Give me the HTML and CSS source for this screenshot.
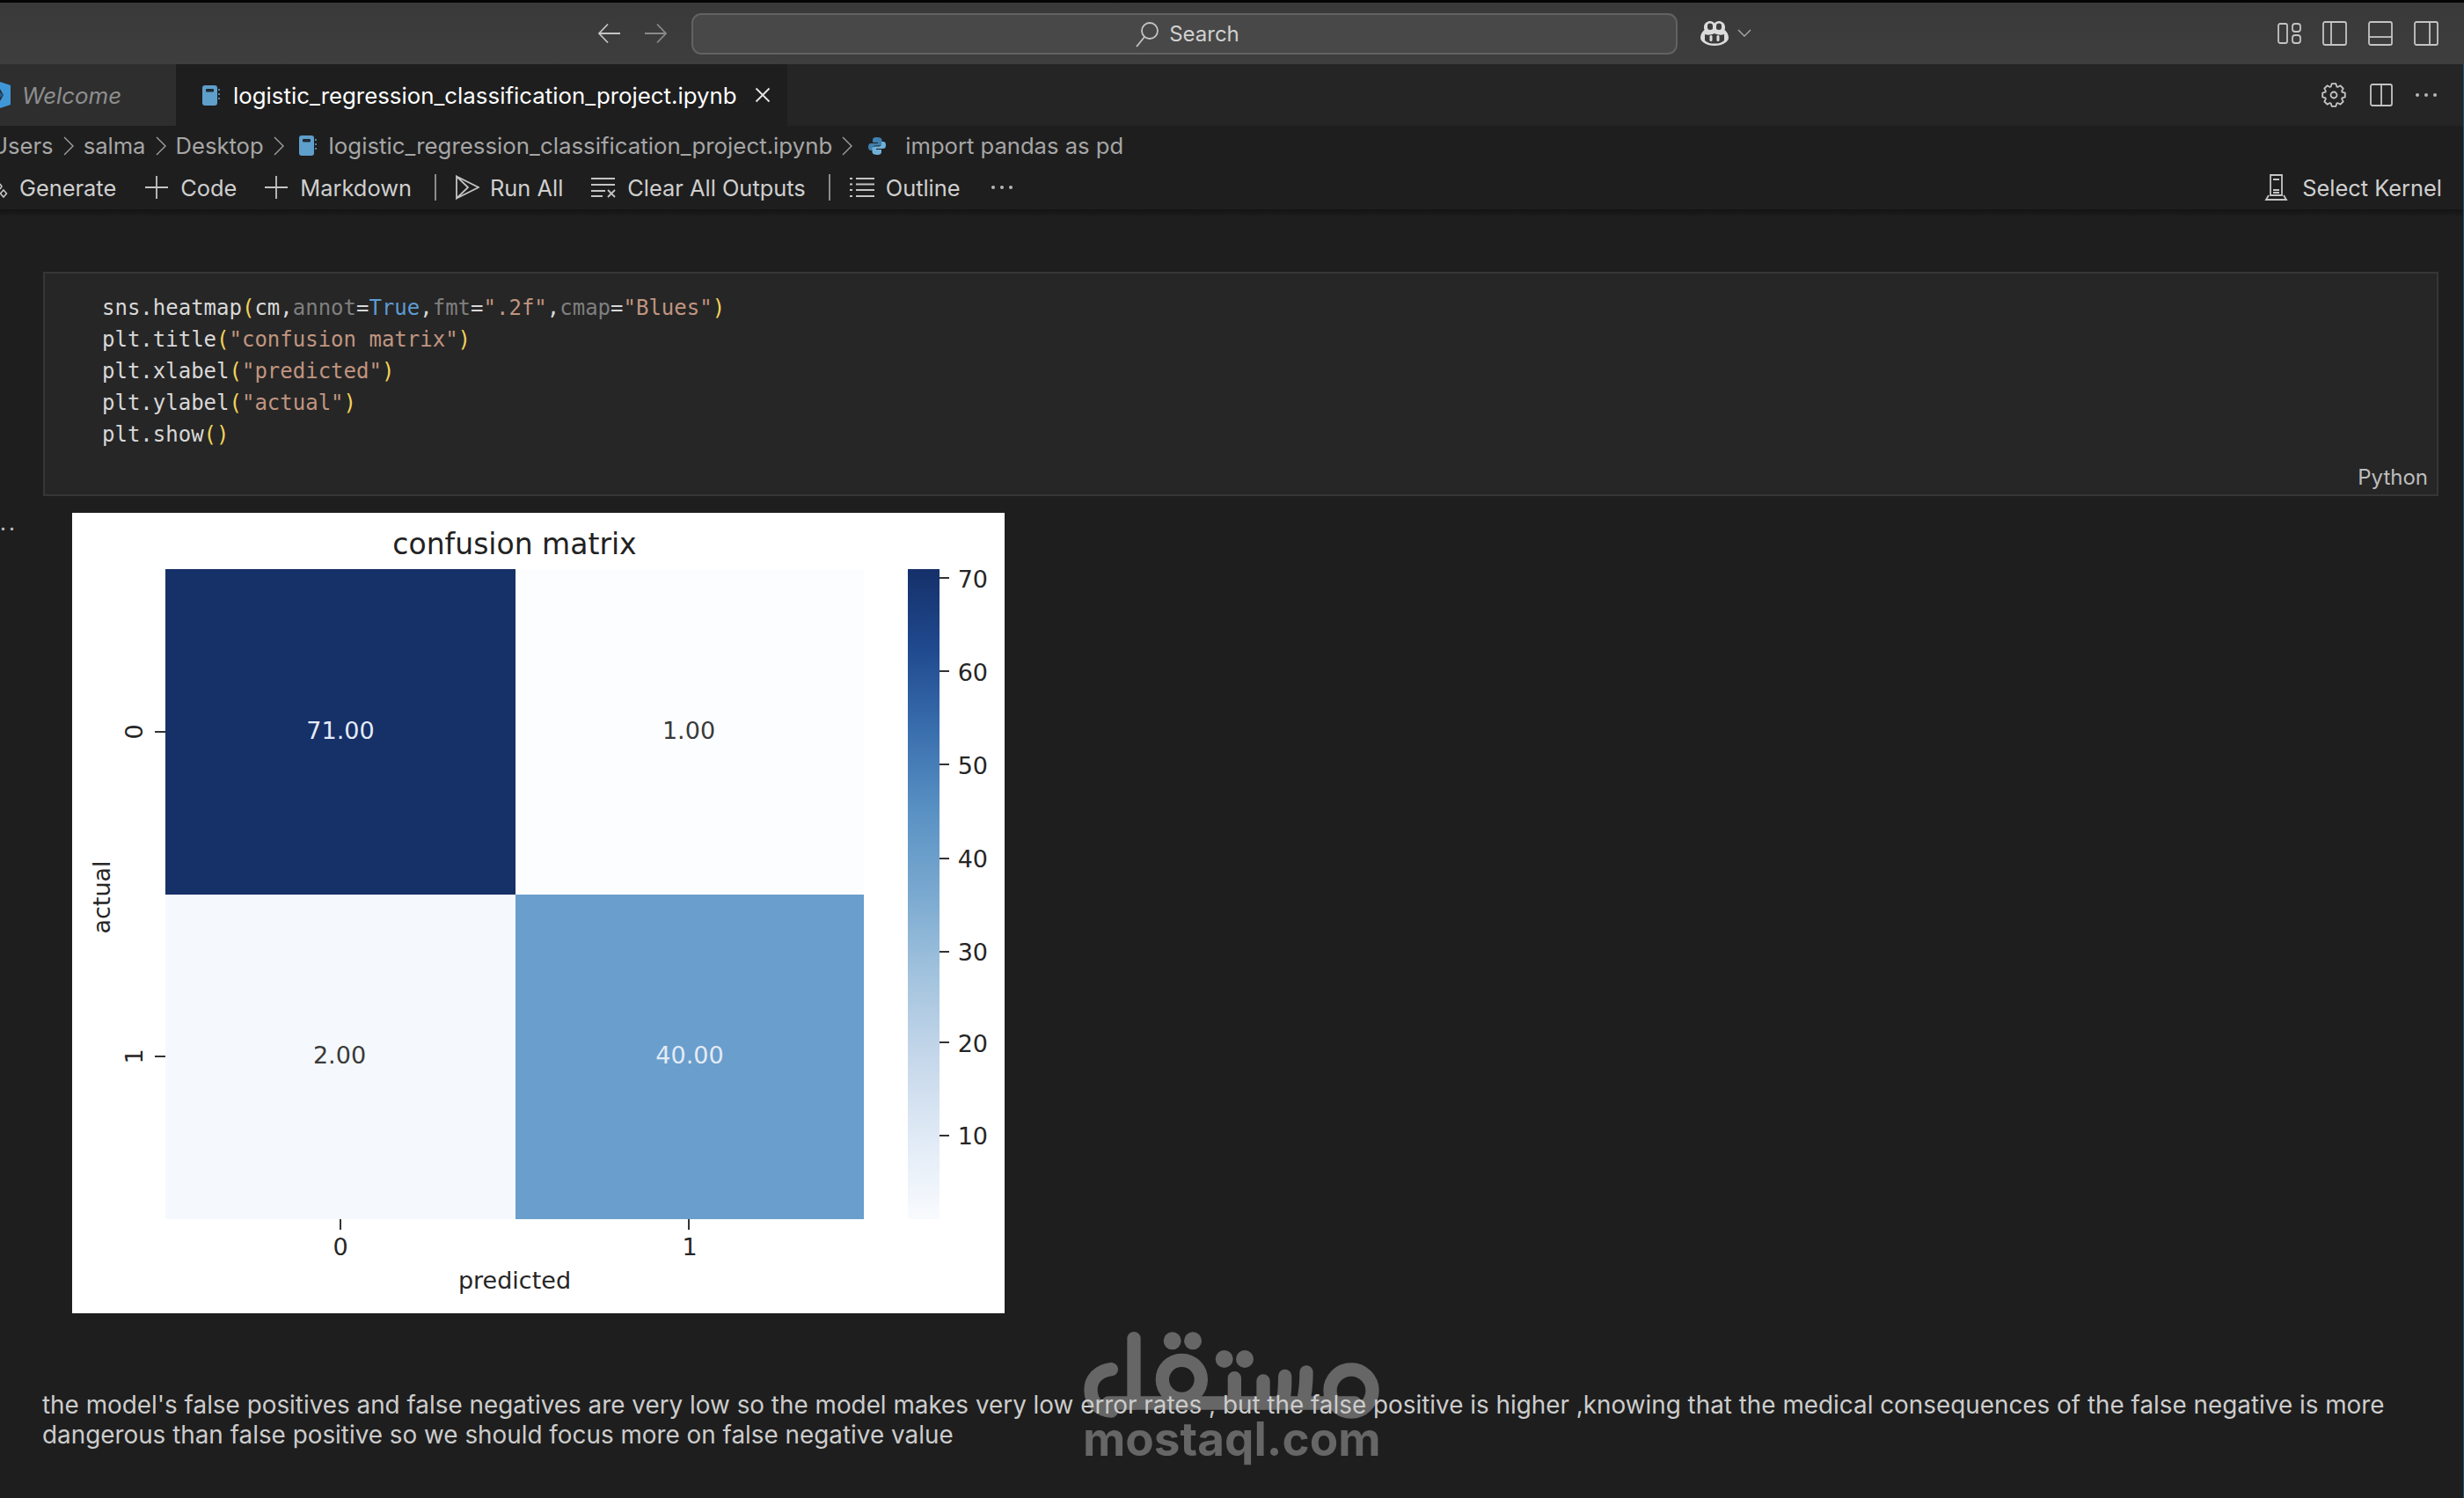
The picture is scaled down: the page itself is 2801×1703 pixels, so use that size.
FILE: index.html
```html
<!DOCTYPE html>
<html lang="en">
<head>
<meta charset="utf-8">
<title>logistic_regression_classification_project.ipynb</title>
<link rel="stylesheet" href="styles.css">
</head>
<body>
<svg class="defs" width="0" height="0" aria-hidden="true">
  <defs>
    <g id="file-ico">
      <rect x="1" y="1" width="17" height="23" rx="3" fill="#5f9fcb"/>
      <rect x="5" y="5" width="9" height="3.5" rx="1" fill="#1e2a33"/>
      <path d="M20 5v2M20 10v2M20 15v2" stroke="#5f9fcb" stroke-width="1.6"/>
    </g>
    <path id="gear-tooth" d="M-3.64 -8.78L-2.26 -12.8H2.26L3.64 -8.78"/>
  </defs>
</svg>
<div class="titlebar">
  <div class="nav">
    <svg class="ico" width="28" height="28" viewBox="0 0 28 28"><path d="M26 14H2M12 3.500L2 14l10 10.500"/></svg>
    <svg class="ico dim" width="28" height="28" viewBox="0 0 28 28"><path d="M2 14h24M16 3.500L26 14 16 24.500"/></svg>
  </div>
  <div class="search">
    <svg class="ico" width="28" height="30" viewBox="0 0 28 30"><circle cx="17" cy="11" r="9"/><path d="M11 18L2 29"/></svg>
    <span>Search</span>
  </div>
  <div class="copilot">
    <svg width="34" height="30" viewBox="0 0 34 30"><path class="cp-head" d="M5 8C5 3 9 1 12 1c2 0 4 1 5 2.500C18 2 20 1 22 1c3 0 7 2 7 7 0 1 0 2-.5 3C31 13 33 16 33 20c0 2-1 3-3 5-4 3-9 4-13 4s-9-1-13-4c-2-2-3-3-3-5 0-4 2-7 4.500-9C5 10 5 9 5 8z"/><path class="cp-eye" d="M9 6c0-1.500 1-2.500 3-2.500s3 1 3 3V9c0 1-1 2-3 2S9 10 9 8.500zM19 6.500c0-2 1-3 3-3s3 1 3 2.500v2.500c0 1.500-1 2.500-3 2.500s-3-1-3-2V6.500z"/><path class="cp-face" d="M6 16c3 1 7 1 11-1 4 2 8 2 11 1v7c-3 3-7 3.500-11 3.500S9 26 6 23z"/><rect class="cp-head" x="11.500" y="17" width="3" height="7" rx="1.500"/><rect class="cp-head" x="19.500" y="17" width="3" height="7" rx="1.500"/></svg>
    <svg class="ico chevron-thin" width="16" height="10" viewBox="0 0 16 10"><path d="M1 1l7 7 7-7"/></svg>
  </div>
  <div class="layout-icons">
    <svg class="ico" width="27" height="28" viewBox="0 0 27 28"><rect x="1" y="3" width="10" height="22" rx="2"/><rect x="17" y="3" width="9" height="9" rx="3"/><rect x="17" y="16" width="9" height="9" rx="3"/></svg>
    <svg class="ico" width="28" height="28" viewBox="0 0 28 28"><rect x="1" y="1" width="26" height="26" rx="2"/><path d="M10 1v26"/></svg>
    <svg class="ico" width="28" height="28" viewBox="0 0 28 28"><rect x="1" y="1" width="26" height="26" rx="2"/><path d="M1 18h26"/></svg>
    <svg class="ico" width="28" height="28" viewBox="0 0 28 28"><rect x="1" y="1" width="26" height="26" rx="2"/><path d="M18 1v26"/></svg>
  </div>
</div>

<div class="workbench">
  <div class="tabbar">
    <div class="tab tab-welcome">
      <svg width="13" height="30" viewBox="0 0 13 30"><path d="M0 0l12 4v22L0 30V22l4-7-4-7z" fill="#3f97d8"/><path d="M0 12l4 3-4 3z" fill="#1e5f92"/></svg>
      <span>Welcome</span>
    </div>
    <div class="tab tab-active">
      <svg width="22" height="25" viewBox="0 0 22 25"><use href="#file-ico"/></svg>
      <span class="tab-name">logistic_regression_classification_project.ipynb</span>
      <svg class="ico close" width="18" height="18" viewBox="0 0 18 18"><path d="M1.500 1.500l15 15M16.500 1.500l-15 15"/></svg>
    </div>
    <div class="tab-actions">
      <svg class="ico gear" width="28" height="28" viewBox="-14 -14 28 28"><use href="#gear-tooth"/><use href="#gear-tooth" transform="rotate(45)"/><use href="#gear-tooth" transform="rotate(90)"/><use href="#gear-tooth" transform="rotate(135)"/><use href="#gear-tooth" transform="rotate(180)"/><use href="#gear-tooth" transform="rotate(225)"/><use href="#gear-tooth" transform="rotate(270)"/><use href="#gear-tooth" transform="rotate(315)"/><circle r="3.500"/></svg>
      <svg class="ico" width="26" height="26" viewBox="0 0 26 26"><rect x="1" y="1" width="24" height="24" rx="2"/><path d="M13 1v24"/></svg>
      <svg class="dots" width="26" height="6" viewBox="0 0 26 6"><circle cx="3" cy="3" r="2"/><circle cx="13" cy="3" r="2"/><circle cx="23" cy="3" r="2"/></svg>
    </div>
  </div>

  <div class="crumbs">
    <span class="crumb-clip">Users</span>
    <svg class="ico chev" width="12" height="22" viewBox="0 0 12 22"><path d="M1 1l10 10L1 21"/></svg>
    <span>salma</span>
    <svg class="ico chev" width="12" height="22" viewBox="0 0 12 22"><path d="M1 1l10 10L1 21"/></svg>
    <span>Desktop</span>
    <svg class="ico chev" width="12" height="22" viewBox="0 0 12 22"><path d="M1 1l10 10L1 21"/></svg>
    <svg class="crumb-file" width="22" height="25" viewBox="0 0 22 25"><use href="#file-ico"/></svg>
    <span class="crumb-name">logistic_regression_classification_project.ipynb</span>
    <svg class="ico chev" width="12" height="22" viewBox="0 0 12 22"><path d="M1 1l10 10L1 21"/></svg>
    <svg class="crumb-py" width="22" height="22" viewBox="0 0 22 22"><path fill="#3f81ae" d="M11 1C7 1 6 2.500 6 4v3h6v1H4C2 8 1 9.500 1 12s1 4 3 4h2v-2.500C6 11.500 7.500 10.500 9 10.500h5c1.500 0 2.500-1 2.500-2.500V4C16.500 2 14 1 11 1z"/><path fill="#6fb0d8" d="M11 21c4 0 5-1.500 5-3v-3h-6v-1h8c2 0 3-1.500 3-4s-1-4-3-4h-2v2.500c0 2-1.500 3-3 3H8c-1.500 0-2.500 1-2.500 2.500v4C5.500 20 8 21 11 21z"/></svg>
    <span>import pandas as pd</span>
  </div>

  <div class="toolbar">
    <svg class="gen-ico" width="10" height="20" viewBox="0 0 10 20"><path class="ico-path" d="M4 9l3.500 4L4 17 .5 13zM0 2l2 3-2 3"/></svg>
    <span class="tb-label gen-label">Generate</span>
    <svg class="ico plus" width="28" height="28" viewBox="0 0 28 28"><path d="M14 1v26M1 14h26"/></svg>
    <span class="tb-label">Code</span>
    <svg class="ico plus plus-2" width="28" height="28" viewBox="0 0 28 28"><path d="M14 1v26M1 14h26"/></svg>
    <span class="tb-label">Markdown</span>
    <i class="sep"></i>
    <svg class="ico" width="28" height="28" viewBox="0 0 28 28"><path d="M2 1.500v25L15 14zM2 1.500L27 14 2 26.500"/></svg>
    <span class="tb-label">Run All</span>
    <svg class="ico clear" width="30" height="24" viewBox="0 0 30 24"><path d="M1 2h27M1 9h27M1 16h16M1 22h13M20 15l8 8M28 15l-8 8"/></svg>
    <span class="tb-label">Clear All Outputs</span>
    <i class="sep"></i>
    <svg class="ico outline" width="30" height="24" viewBox="0 0 30 24"><path d="M1 2h3M8 2h21M1 8.500h3M8 8.500h21M1 15h3M8 15h21M1 22h3M8 22h21"/></svg>
    <span class="tb-label">Outline</span>
    <svg class="dots tb-dots" width="26" height="6" viewBox="0 0 26 6"><circle cx="3" cy="3" r="2"/><circle cx="13" cy="3" r="2"/><circle cx="23" cy="3" r="2"/></svg>
    <div class="kernel">
      <svg class="ico" width="27" height="30" viewBox="0 0 27 30"><path d="M7 1h13v23H7zM10 6h7M10 18h7M10 21h7M5 24L2 29h23l-3-5"/></svg>
      <span class="tb-label">Select Kernel</span>
    </div>
  </div>
  <div class="toolbar-shadow"></div>

  <main class="notebook">
    <section class="cell">
      <pre class="code">sns.heatmap<b class="par">(</b>cm,<i class="arg">annot</i>=<i class="kw">True</i>,<i class="arg">fmt</i>=<i class="str">".2f"</i>,<i class="arg">cmap</i>=<i class="str">"Blues"</i><b class="par">)</b>
plt.title<b class="par">(</b><i class="str">"confusion matrix"</i><b class="par">)</b>
plt.xlabel<b class="par">(</b><i class="str">"predicted"</i><b class="par">)</b>
plt.ylabel<b class="par">(</b><i class="str">"actual"</i><b class="par">)</b>
plt.show<b class="par">()</b></pre>
      <div class="cell-lang">Python</div>
    </section>

    <section class="output">
      <div class="gutter-dots">..</div>
      <svg class="chart" width="1060" height="910" viewBox="0 0 1060 910" role="img" aria-label="confusion matrix heatmap">
        <defs>
          <linearGradient id="blues" x1="0" y1="0" x2="0" y2="1">
            <stop offset="0" stop-color="#15306a"/>
            <stop offset=".125" stop-color="#204a8f"/>
            <stop offset=".25" stop-color="#3a6fae"/>
            <stop offset=".375" stop-color="#5a92c4"/>
            <stop offset=".5" stop-color="#7aa9d0"/>
            <stop offset=".625" stop-color="#a2c3de"/>
            <stop offset=".75" stop-color="#c5d7ea"/>
            <stop offset=".875" stop-color="#e0eaf6"/>
            <stop offset="1" stop-color="#f9fbfe"/>
          </linearGradient>
        </defs>
        <rect width="1060" height="910" fill="#fff"/>
        <text class="t-title" x="503" y="35">confusion matrix</text>
        <rect x="106" y="64" width="398" height="370" fill="#163068"/>
        <rect x="504" y="64" width="396" height="370" fill="#fbfdff"/>
        <rect x="106" y="434" width="398" height="369" fill="#f5f9fd"/>
        <rect x="504" y="434" width="396" height="369" fill="#6a9ecc"/>
        <text class="t-mid t-light" x="305" y="247">71.00</text>
        <text class="t-mid t-dark" x="701" y="247">1.00</text>
        <text class="t-mid t-dark" x="304" y="616">2.00</text>
        <text class="t-mid t-light" x="702" y="616">40.00</text>
        <path class="tick" d="M94 249h12M94 618h12M305 803v12M701 803v12"/>
        <text class="t-mid t-ink" x="305" y="834">0</text>
        <text class="t-mid t-ink" x="702" y="834">1</text>
        <text class="t-mid t-ink" transform="translate(70 249) rotate(-90)">0</text>
        <text class="t-mid t-ink" transform="translate(70 618) rotate(-90)">1</text>
        <text class="t-mid t-ink" x="503" y="872">predicted</text>
        <text class="t-mid t-ink" transform="translate(33 437) rotate(-90)">actual</text>
        <rect x="950" y="64" width="36" height="739" fill="url(#blues)"/>
        <path class="tick" d="M986 74h11M986 180h11M986 286h11M986 393h11M986 499h11M986 602h11M986 708h11"/>
        <text class="t-bar" x="1041" y="75">70</text>
        <text class="t-bar" x="1041" y="181">60</text>
        <text class="t-bar" x="1041" y="287">50</text>
        <text class="t-bar" x="1041" y="393">40</text>
        <text class="t-bar" x="1041" y="499">30</text>
        <text class="t-bar" x="1041" y="603">20</text>
        <text class="t-bar" x="1041" y="708">10</text>
      </svg>
    </section>

    <p class="markdown">the model's false positives and false negatives are very low so the model makes very low error rates , but the false positive is higher ,knowing that the medical consequences of the false negative is more dangerous than false positive so we should focus more on false negative value</p>
  </main>
</div>

<div class="watermark">
  <svg width="360" height="110" viewBox="0 0 1080 330" aria-label="mostaql logo">
    <g class="wm-stroke">
      <path d="M130 155C85 160 60 190 60 225c0 42 30 72 70 72"/>
      <path d="M207 50v220"/>
      <path d="M120 270H960"/>
      <circle cx="370" cy="190" r="66"/>
      <path d="M550 185v85M648 195v75M722 178c0 40 0 60-8 92M795 165c0 45-4 75-12 105"/>
      <circle cx="948" cy="228" r="72"/>
    </g>
    <g class="wm-fill">
      <circle cx="338" cy="58" r="30"/><circle cx="408" cy="58" r="30"/>
      <circle cx="515" cy="120" r="30"/><circle cx="585" cy="120" r="30"/>
    </g>
  </svg>
  <div class="wm-text">mostaql.com</div>
</div>
</body>
</html>
```

FILE: styles.css
```css
* { box-sizing: border-box; }
html, body { margin: 0; padding: 0; }
body {
  width: 2801px;
  height: 1703px;
  overflow: hidden;
  background: #1e1e1e;
  color: #cccccc;
  font-family: Inter, "Liberation Sans", sans-serif;
  font-size: 24px;
  position: relative;
  display: flex;
  flex-direction: column;
}
.defs { position: absolute; }
svg { display: block; flex: none; }
.ico { fill: none; stroke: #c4c4c4; stroke-width: 1.8; }
.ico.dim { stroke: #8a8a8a; }
.ico.chevron-thin { stroke: #a8a8a8; stroke-width: 1.4; }
.dots { fill: #b8b8b8; }

.titlebar {
  height: 73px;
  flex: none;
  border-top: 3px solid #050505;
  background: linear-gradient(#393939, #3e3e3e);
  display: flex;
  align-items: center;
  padding: 0 29px 0 679px;
}
.nav { display: flex; gap: 24px; }
.search {
  width: 1121px;
  height: 47px;
  margin: 1px 0 0 27px;
  display: flex;
  align-items: center;
  justify-content: center;
  gap: 11px;
  background: #484848;
  border: 2px solid #626262;
  border-radius: 11px;
  color: #d0d0d0;
  padding-left: 6px;
}
.search svg { margin-top: 1px; }
.copilot { display: flex; align-items: center; gap: 9px; margin-left: 25px; }
.cp-head { fill: #dcdcdc; }
.cp-eye { fill: #3c3c3c; }
.cp-face { fill: #3c3c3c; }
.layout-icons { margin-left: auto; display: flex; align-items: center; gap: 24px; }

.workbench {
  flex: 1;
  min-height: 0;
  display: flex;
  flex-direction: column;
  border-right: 1px solid #23506f;
  position: relative;
}
.tabbar {
  height: 70px;
  flex: none;
  background: #252525;
  display: flex;
  align-items: stretch;
}
.tab { display: flex; align-items: center; font-size: 25.85px; }
.tab-welcome {
  width: 200px;
  background: #2e2e2e;
  color: #8e8e8e;
  font-style: italic;
  gap: 12px;
}
.tab-active {
  width: 695px;
  background: #1e1e1e;
  color: #ffffff;
  padding-left: 29px;
}
.tab-name { margin-left: 14px; }
.close { margin-left: 20px; stroke: #e6e6e6; }
.tab-actions {
  margin-left: auto;
  display: flex;
  align-items: center;
  gap: 25px;
  padding-right: 29px;
}
.gear { margin-right: 2px; }

.crumbs {
  height: 47px;
  flex: none;
  display: flex;
  align-items: center;
  padding-bottom: 2px;
  font-size: 25.6px;
  color: #a6a6a6;
}
.crumb-clip { margin-left: -10px; }
.crumb-name { font-size: 25.85px; }
.chev { margin: 0 11px; stroke: #a0a0a0; stroke-width: 1.4; }
.crumb-file { margin-right: 13px; margin-left: 5px; }
.crumb-py { margin: 0 21px 0 6px; }

.toolbar {
  height: 48px;
  flex: none;
  display: flex;
  align-items: center;
  padding: 0 24px 2px 0;
  font-size: 25.4px;
  color: #cfcfcf;
}
.ico-path { fill: none; stroke: #c4c4c4; stroke-width: 1.6; }
.gen-ico { margin-right: 12px; margin-top: 8px; }
.plus { margin: 0 13px 0 32px; }
.plus-2 { margin-left: 31px; }
.sep { width: 2px; height: 30px; margin: 0 21px 0 26px; background: #8c8c8c; }
.tb-label { white-space: nowrap; }
.toolbar > svg:not(.plus):not(.gen-ico):not(.tb-dots) { margin-right: 12px; }
.clear { margin-left: 31px; }
.tb-dots { margin-left: 34px; }
.kernel { margin-left: auto; display: flex; align-items: center; gap: 16px; }
.toolbar-shadow {
  height: 9px;
  flex: none;
  background: linear-gradient(#141414, #1e1e1e);
}

.notebook { flex: 1; min-height: 0; position: relative; }
.cell {
  margin: 62px 28px 0 49px;
  height: 255px;
  background: #262626;
  border: 2px solid #363636;
  display: flex;
  flex-direction: column;
}
.code {
  margin: 0;
  padding: 21px 0 0 65px;
  font-family: "DejaVu Sans Mono", "Liberation Mono", monospace;
  font-size: 24px;
  line-height: 36px;
  color: #d8d8d8;
  flex: 1;
}
.code i, .code b { font-style: normal; font-weight: 400; }
.arg { color: #7f7f7f; }
.kw { color: #5d9bd3; }
.str { color: #c09580; }
.par { color: #f2d35a; }
.cell-lang { text-align: right; padding: 0 10px 4px 0; color: #bdbdbd; line-height: 30px; }

.output { margin: 19px 0 0 82px; position: relative; }
.gutter-dots {
  position: absolute;
  left: -82px;
  top: 0;
  color: #c0c0c0;
  letter-spacing: 3px;
  line-height: 24px;
}
.t-title, .t-mid, .t-bar { font-family: "DejaVu Sans", sans-serif; dominant-baseline: central; }
.t-title { font-size: 33px; text-anchor: middle; fill: #222; }
.t-mid { font-size: 27px; text-anchor: middle; }
.t-bar { font-size: 27px; text-anchor: end; fill: #262626; }
.t-ink { fill: #262626; }
.t-dark { fill: #3a3a3a; }
.t-light { fill: #e4ebf6; }
.tick { stroke: #333; stroke-width: 2; fill: none; }

.markdown {
  margin: 87px 40px 0 48px;
  font-size: 27.85px;
  line-height: 34px;
  color: #cccccc;
  position: relative;
  z-index: 2;
}

.watermark {
  position: absolute;
  left: 1220px;
  top: 1505px;
  width: 360px;
  z-index: 1;
}
.wm-stroke { fill: none; stroke: #666; stroke-width: 46; stroke-linecap: round; }
.wm-fill { fill: #666; }
.wm-text {
  position: absolute;
  left: 11px;
  top: 101px;
  font-family: Inter, "Liberation Sans", sans-serif;
  font-weight: 700;
  font-size: 53px;
  line-height: 60px;
  color: #666;
  white-space: nowrap;
}
```
